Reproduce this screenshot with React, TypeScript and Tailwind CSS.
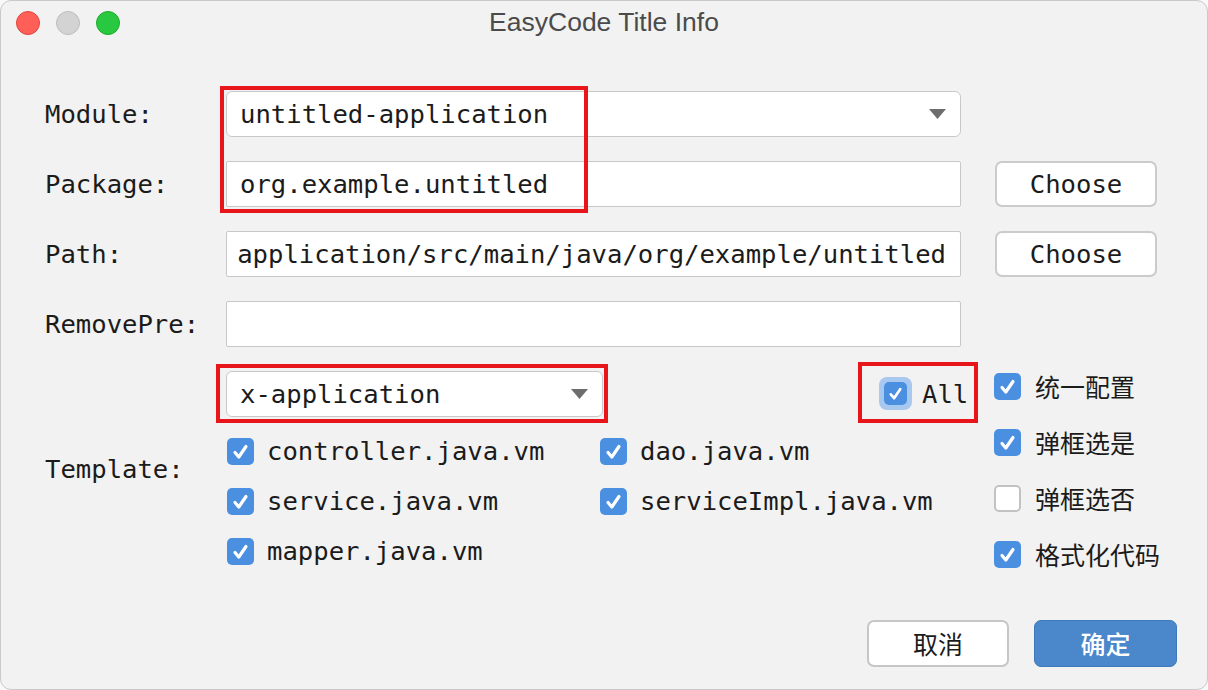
import type { ReactNode } from "react";

const mono = "font-['DejaVu_Sans_Mono',monospace] text-[25.6px] text-[#1b1b1b]";
const cjk = "font-['Noto_Sans_CJK_SC',sans-serif] text-[25px] text-[#1b1b1b]";

const Check = ({ checked = true, size = 27 }: { checked?: boolean; size?: number }) => (
    <div
        className={`flex items-center justify-center rounded-[5px] shrink-0 ${
            checked ? "bg-[#4b8fe0]" : "bg-white border-2 border-[#c2c2c2]"
        }`}
        style={{ width: size, height: size }}
    >
        {checked && (
            <svg width={size} height={size} viewBox="0 0 27 27">
                <path d="M8 14.5 L11.8 19 L19 8.5" fill="none" stroke="white" strokeWidth="3.2" strokeLinecap="round" strokeLinejoin="round" />
            </svg>
        )}
    </div>
);

const Arrow = () => (
    <svg width="17" height="10" viewBox="0 0 17 10" className="shrink-0">
        <path d="M0 0 H17 L8.5 10 Z" fill="#6d6d6d" />
    </svg>
);

const Row = ({ label, children }: { label: string; children: ReactNode }) => (
    <div className="flex items-center h-[46px]">
        <div className={`w-[181px] shrink-0 ${mono}`}>{label}</div>
        {children}
    </div>
);

const ChooseBtn = () => (
    <button className={`ml-[34px] w-[162px] h-[46px] shrink-0 bg-white border-2 border-[#cbcbcb] rounded-[7px] ${mono}`}>
        Choose
    </button>
);

const templates = [
    "controller.java.vm",
    "dao.java.vm",
    "service.java.vm",
    "serviceImpl.java.vm",
    "mapper.java.vm",
];

const options = [
    { name: "统一配置", on: true },
    { name: "弹框选是", on: true },
    { name: "弹框选否", on: false },
    { name: "格式化代码", on: true },
];

export default function App() {
    return (
        <div className="w-[1208px] h-[690px] bg-[#f9f9f9]">
            <div className="relative w-full h-full bg-[#f2f2f2] rounded-[11px] border border-[#c9c9c9] overflow-hidden flex flex-col">
                {/* Title bar */}
                <div className="grid grid-cols-[1fr_auto_1fr] items-center h-[44px] shrink-0">
                    <div className="flex items-center gap-[16px] pl-[15px]">
                        <div className="w-[24px] h-[24px] rounded-full bg-[#fe5f57] border border-[#e0443e]" />
                        <div className="w-[24px] h-[24px] rounded-full bg-[#d3d3d3] border border-[#bdbdbd]" />
                        <div className="w-[24px] h-[24px] rounded-full bg-[#28c840] border border-[#1aab29]" />
                    </div>
                    <div className="font-['Liberation_Sans',sans-serif] text-[26.5px] text-[#4b4b4b]">EasyCode Title Info</div>
                    <div />
                </div>

                {/* Form */}
                <div className="flex flex-col gap-[24px] pl-[44px] pt-[46px]">
                    <Row label="Module:">
                        <div className="w-[735px] h-[46px] shrink-0 bg-white border border-[#c8c8c8] rounded-[6px] flex items-center justify-between pl-[13px] pr-[14px]">
                            <span className={mono}>untitled-application</span>
                            <Arrow />
                        </div>
                    </Row>
                    <Row label="Package:">
                        <div className="w-[735px] h-[46px] shrink-0 bg-white border border-[#c8c8c8] rounded-[2px] flex items-center pl-[13px]">
                            <span className={mono}>org.example.untitled</span>
                        </div>
                        <ChooseBtn />
                    </Row>
                    <Row label="Path:">
                        <div className="w-[735px] h-[46px] shrink-0 bg-white border border-[#c8c8c8] rounded-[2px] flex items-center justify-end pr-[14px] overflow-hidden">
                            <span className={`${mono} whitespace-nowrap`}>application/src/main/java/org/example/untitled</span>
                        </div>
                        <ChooseBtn />
                    </Row>
                    <Row label="RemovePre:">
                        <div className="w-[735px] h-[46px] shrink-0 bg-white border border-[#c8c8c8] rounded-[2px]" />
                    </Row>

                    {/* Template */}
                    <div className="flex">
                        <div className={`w-[181px] shrink-0 self-center ${mono}`}>Template:</div>
                        <div className="w-[735px] shrink-0 flex flex-col">
                            <div className="flex items-center h-[46px]">
                                <div className="w-[377px] h-[46px] shrink-0 bg-white border border-[#c8c8c8] rounded-[6px] flex items-center justify-between pl-[13px] pr-[14px]">
                                    <span className={mono}>x-application</span>
                                    <Arrow />
                                </div>
                                <div className="ml-[276px] shrink-0 flex items-center gap-[10px]">
                                    <div className="w-[33px] h-[33px] rounded-[8px] bg-[#a8c8f0] flex items-center justify-center">
                                        <Check size={23} />
                                    </div>
                                    <span className={`${mono} whitespace-nowrap`}>All</span>
                                </div>
                            </div>
                            <div className="grid grid-cols-[373px_1fr] gap-y-[23px] mt-[21px] pl-[1px]">
                                {templates.map((t) => (
                                    <div key={t} className="flex items-center gap-[13px] h-[27px]">
                                        <Check />
                                        <span className={`${mono} whitespace-nowrap`}>{t}</span>
                                    </div>
                                ))}
                            </div>
                        </div>
                        <div className="ml-[33px] mt-[2px] flex flex-col gap-[29px]">
                            {options.map((o) => (
                                <div key={o.name} className="flex items-center gap-[14px] h-[27px]">
                                    <Check checked={o.on} />
                                    <span className={`${cjk} whitespace-nowrap`}>{o.name}</span>
                                </div>
                            ))}
                        </div>
                    </div>
                </div>

                {/* Footer */}
                <div className="mt-auto flex justify-end gap-[25px] pr-[30px] pb-[22px]">
                    <button className={`w-[142px] h-[47px] bg-white border-2 border-[#c6c6c6] rounded-[7px] ${cjk}`}>取消</button>
                    <button className={`w-[143px] h-[47px] bg-[#4a87cb] border border-[#3f79ba] rounded-[7px] ${cjk} text-white font-medium`}>
                        <span className="text-white">确定</span>
                    </button>
                </div>

                {/* Annotation overlays */}
                <div className="absolute left-[219px] top-[85px] w-[368px] h-[127px] border-4 border-[#e8151b] pointer-events-none" />
                <div className="absolute left-[215px] top-[363px] w-[392px] h-[59px] border-4 border-[#e8151b] pointer-events-none" />
                <div className="absolute left-[857px] top-[361px] w-[120px] h-[61px] border-4 border-[#e8151b] pointer-events-none" />
            </div>
        </div>
    );
}
